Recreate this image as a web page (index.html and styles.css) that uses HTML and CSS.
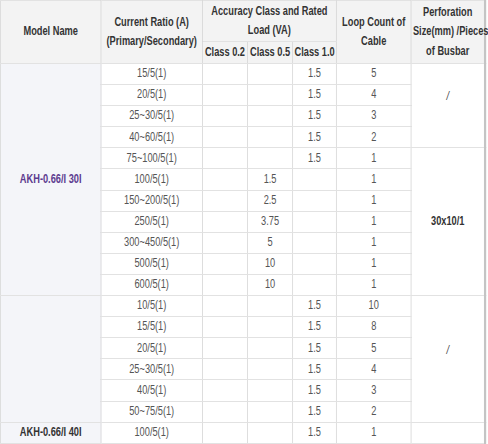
FILE: index.html
```html
<!DOCTYPE html>
<html>
<head>
<meta charset="utf-8">
<link rel="stylesheet" href="styles.css">
</head>
<body>
<div class="frame">
<table class="spec">
  <colgroup>
    <col class="c-model"><col class="c-ratio"><col class="c-cls"><col class="c-cls"><col class="c-cls2"><col class="c-loop"><col class="c-perf">
  </colgroup>
  <thead>
    <tr class="h1">
      <th rowspan="2">Model Name</th>
      <th rowspan="2">Current Ratio (A)<br>(Primary/Secondary)</th>
      <th colspan="3">Accuracy Class and Rated<br>Load (VA)</th>
      <th rowspan="2">Loop Count of<br>Cable</th>
      <th rowspan="2">Perforation<br>Size(mm) /Pieces<br>of Busbar</th>
    </tr>
    <tr class="h2">
      <th>Class 0.2</th><th>Class 0.5</th><th>Class 1.0</th>
    </tr>
  </thead>
  <tbody>
    <tr><th class="model" rowspan="11"><span class="link">AKH-0.66/I 30I</span></th><td>15/5(1)</td><td></td><td></td><td>1.5</td><td>5</td><td class="perf slash" rowspan="4">/</td></tr>
    <tr><td>20/5(1)</td><td></td><td></td><td>1.5</td><td>4</td></tr>
    <tr><td>25~30/5(1)</td><td></td><td></td><td>1.5</td><td>3</td></tr>
    <tr><td>40~60/5(1)</td><td></td><td></td><td>1.5</td><td>2</td></tr>
    <tr><td>75~100/5(1)</td><td></td><td></td><td>1.5</td><td>1</td><td class="perf bold" rowspan="7">30x10/1</td></tr>
    <tr><td>100/5(1)</td><td></td><td>1.5</td><td></td><td>1</td></tr>
    <tr><td>150~200/5(1)</td><td></td><td>2.5</td><td></td><td>1</td></tr>
    <tr><td>250/5(1)</td><td></td><td>3.75</td><td></td><td>1</td></tr>
    <tr><td>300~450/5(1)</td><td></td><td>5</td><td></td><td>1</td></tr>
    <tr><td>500/5(1)</td><td></td><td>10</td><td></td><td>1</td></tr>
    <tr><td>600/5(1)</td><td></td><td>10</td><td></td><td>1</td></tr>
    <tr><th class="model" rowspan="6"></th><td>10/5(1)</td><td></td><td></td><td>1.5</td><td>10</td><td class="perf slash" rowspan="6">/</td></tr>
    <tr><td>15/5(1)</td><td></td><td></td><td>1.5</td><td>8</td></tr>
    <tr><td>20/5(1)</td><td></td><td></td><td>1.5</td><td>5</td></tr>
    <tr><td>25~30/5(1)</td><td></td><td></td><td>1.5</td><td>4</td></tr>
    <tr><td>40/5(1)</td><td></td><td></td><td>1.5</td><td>3</td></tr>
    <tr><td>50~75/5(1)</td><td></td><td></td><td>1.5</td><td>2</td></tr>
    <tr><th class="model">AKH-0.66/I 40I</th><td>100/5(1)</td><td></td><td></td><td>1.5</td><td>1</td><td class="perf"></td></tr>
  </tbody>
</table>
</div>
</body>
</html>
```
FILE: styles.css
```css
html, body {
  margin: 0;
  padding: 0;
  background: #ffffff;
  overflow: hidden;
}
.frame {
  width: 488px;
  height: 444px;
  overflow: hidden;
}
.spec {
  border-collapse: collapse;
  table-layout: fixed;
  width: 657px;
  font-family: "Liberation Sans", Arial, sans-serif;
  font-size: 12.5px;
  color: #555555;
  border-right: 3px solid #c4c4c4;
  transform: scaleX(0.74);
  transform-origin: 0 0;
}
.c-model { width: 136px; }
.c-ratio { width: 137px; }
.c-cls { width: 61px; }
.c-cls2 { width: 59px; }
.c-loop { width: 101px; }
.c-perf { width: 100px; }
.spec th, .spec td {
  border: 1px solid #d2d2d2;
  border-top-color: #e2e2e2;
  border-bottom-color: #e2e2e2;
  text-align: center;
  vertical-align: middle;
  padding: 0 2px;
  line-height: 19.5px;
  white-space: nowrap;
}
.spec thead th {
  background: #f3f3f3;
  color: #333333;
  font-weight: bold;
}
.h1 { height: 41px; }
.h2 { height: 22px; }
.spec tbody tr { height: 21.1px; }
.spec .model {
  background: #f4f5f9;
  color: #333333;
  font-weight: bold;
}
.link { color: #5c3b8f; }
.perf.bold { font-weight: bold; color: #333333; }
.perf.slash { padding-bottom: 17px; font-style: italic; color: #444444; }
```
